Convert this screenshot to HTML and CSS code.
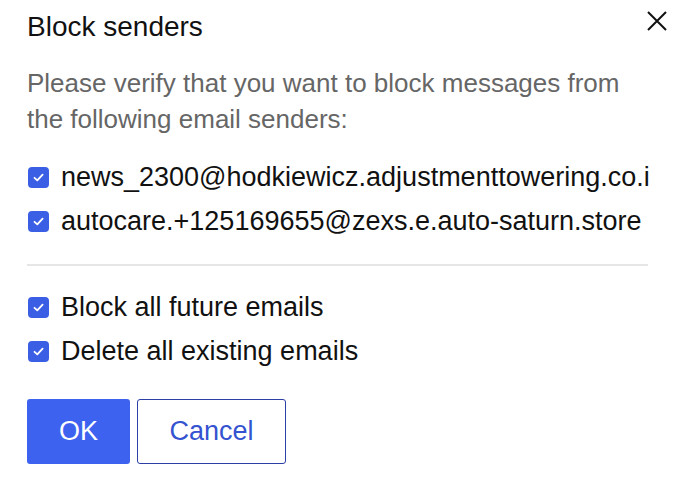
FILE: index.html
```html
<!DOCTYPE html>
<html lang="en">
<head>
  <meta charset="UTF-8" />
  <title>Block senders</title>
  <link rel="stylesheet" href="styles.css">
</head>
<body>

  <div class="dialog">
    <!-- Header -->
    <div class="header">
      <h2 class="title">Block senders</h2>
      <button class="close" aria-label="Close">
        <svg width="20" height="20" viewBox="0 0 20 20">
          <path d="M1 1 L19 19 M19 1 L1 19" stroke="#111" stroke-width="2" fill="none" />
        </svg>
      </button>
    </div>

    <p class="intro">Please verify that you want to block messages from the following email senders:</p>

    <!-- Senders -->
    <div class="list">
      <label class="row">
        <span class="box"><svg width="13" height="13" viewBox="0 0 13 13"><path d="M2.5 6.8 L5.3 9.4 L10.6 3.6" stroke="#fff" stroke-width="1.8" fill="none" stroke-linecap="round" stroke-linejoin="round" /></svg></span>
        <span class="text">news_2300@hodkiewicz.adjustmenttowering.co.i</span>
      </label>
      <label class="row">
        <span class="box"><svg width="13" height="13" viewBox="0 0 13 13"><path d="M2.5 6.8 L5.3 9.4 L10.6 3.6" stroke="#fff" stroke-width="1.8" fill="none" stroke-linecap="round" stroke-linejoin="round" /></svg></span>
        <span class="text">autocare.+125169655@zexs.e.auto-saturn.store</span>
      </label>
    </div>

    <hr class="divider" />

    <!-- Options -->
    <div class="list">
      <label class="row">
        <span class="box"><svg width="13" height="13" viewBox="0 0 13 13"><path d="M2.5 6.8 L5.3 9.4 L10.6 3.6" stroke="#fff" stroke-width="1.8" fill="none" stroke-linecap="round" stroke-linejoin="round" /></svg></span>
        <span class="text">Block all future emails</span>
      </label>
      <label class="row">
        <span class="box"><svg width="13" height="13" viewBox="0 0 13 13"><path d="M2.5 6.8 L5.3 9.4 L10.6 3.6" stroke="#fff" stroke-width="1.8" fill="none" stroke-linecap="round" stroke-linejoin="round" /></svg></span>
        <span class="text">Delete all existing emails</span>
      </label>
    </div>

    <!-- Actions -->
    <div class="actions">
      <button class="btn btn-ok">OK</button>
      <button class="btn btn-cancel">Cancel</button>
    </div>
  </div>

</body>
</html>
```

FILE: styles.css
```css
body {
  margin: 0;
  background-color: #fff;
  font-family: "Liberation Sans", Arial, sans-serif;
  color: #111;
}

.dialog {
  padding: 9px 23px 0 27px;
}

.header {
  display: flex;
  justify-content: space-between;
  align-items: flex-start;
}

.title {
  margin: 0;
  font-size: 28px;
  font-weight: normal;
  line-height: 36px;
}

.close {
  border: none;
  background: none;
  padding: 0;
  margin-top: 2px;
  width: 20px;
  height: 20px;
}

.intro {
  margin: 20px 20px 0 0;
  font-size: 26px;
  line-height: 36px;
  color: #666;
}

.list {
  margin-top: 18px;
}

.row {
  display: flex;
  align-items: center;
  height: 44px;
}

.box {
  width: 21px;
  height: 21px;
  border-radius: 4px;
  background-color: #3b5fe4;
  display: flex;
  align-items: center;
  justify-content: center;
  margin: 0 12px 0 1px;
  flex-shrink: 0;
}

.text {
  font-size: 27px;
  white-space: nowrap;
}

.divider {
  border: none;
  border-top: 2px solid #e6e6e6;
  margin: 21px 19px 0 0;
}

.divider + .list {
  margin-top: 19px;
}

.actions {
  display: flex;
  gap: 7px;
  margin-top: 26px;
}

.btn {
  height: 65px;
  border-radius: 3px;
  font-family: "Liberation Sans", Arial, sans-serif;
  font-size: 27px;
}

.btn-ok {
  width: 103px;
  background-color: #3d62ef;
  border: none;
  color: #fff;
}

.btn-cancel {
  width: 149px;
  background-color: #fff;
  border: 1.5px solid #2b3fa6;
  color: #3553d1;
}
```
